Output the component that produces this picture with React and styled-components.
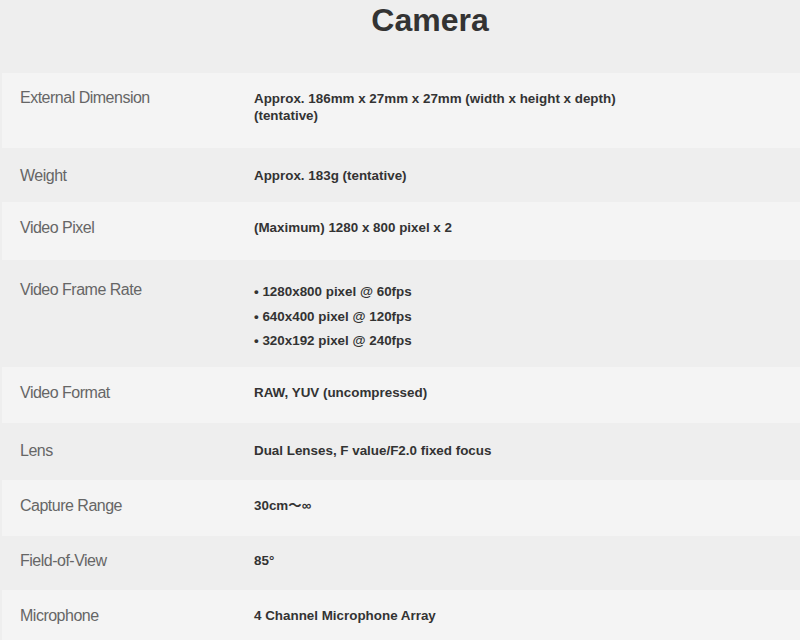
import React from "react";
import styled, { createGlobalStyle } from "styled-components";

const Global = createGlobalStyle`
  html, body {
    margin: 0;
    padding: 0;
    background: #eeeeee;
  }
  body {
    font-family: "Liberation Sans", Arial, sans-serif;
  }
`

const Page = styled.div`
  width: 800px;
  height: 640px;
  overflow: hidden;
  background: #eeeeee;
`

const Header = styled.header`
  height: 73px;
  padding-left: 60px;
  text-align: center;
`

const Title = styled.h1`
  margin: 0;
  font-size: 32px;
  line-height: 40px;
  font-weight: bold;
  color: #333333;
`

const Row = styled.div`
  display: grid;
  grid-template-columns: 234px 1fr;
  box-sizing: border-box;
  min-height: ${p => p.$h}px;
  padding: ${p => p.$pt}px 20px 0 20px;
  background: ${p => (p.$light ? "#f4f4f4" : "#eeeeee")};
  box-shadow: ${p => (p.$light ? "inset 2px 0 0 #eeeeee" : "none")};
`

const Label = styled.div`
  font-size: 16px;
  line-height: 20px;
  letter-spacing: -0.5px;
  color: #666666;
`

const Value = styled.div`
  font-size: 13.4px;
  line-height: ${p => p.$lh || 20}px;
  padding-top: ${p => p.$mt || 0}px;
  font-weight: bold;
  color: #333333;
  font-family: "Liberation Sans", "Noto Sans CJK JP", sans-serif;
`

const List = styled.ul`
  margin: 0;
  padding: 0;
  list-style: none;
`

const Item = styled.li`
  font-size: 13.4px;
  line-height: 24.5px;
  font-weight: bold;
  color: #333333;
`

const rows = [
  { label: "External Dimension", h: 75, pt: 15, value: <Value $lh={17} $mt={2}>Approx. 186mm x 27mm x 27mm (width x height x depth)<br />(tentative)</Value> },
  { label: "Weight", h: 54, pt: 18, value: <Value>Approx. 183g (tentative)</Value> },
  { label: "Video Pixel", h: 58, pt: 16, value: <Value>(Maximum) 1280 x 800 pixel x 2</Value> },
  {
    label: "Video Frame Rate", h: 107, pt: 20,
    value: (
      <List>
        <Item>• 1280x800 pixel @ 60fps</Item>
        <Item>• 640x400 pixel @ 120fps</Item>
        <Item>• 320x192 pixel @ 240fps</Item>
      </List>
    ),
  },
  { label: "Video Format", h: 56, pt: 16, value: <Value>RAW, YUV (uncompressed)</Value> },
  { label: "Lens", h: 57, pt: 18, value: <Value>Dual Lenses, F value/F2.0 fixed focus</Value> },
  { label: "Capture Range", h: 56, pt: 16, value: <Value>30cm〜∞</Value> },
  { label: "Field-of-View", h: 54, pt: 15, value: <Value>85°</Value> },
  { label: "Microphone", h: 56, pt: 16, value: <Value>4 Channel Microphone Array</Value> },
]

function App() {
  return (
    <Page>
      <Global />
      <Header>
        <Title>Camera</Title>
      </Header>
      {rows.map((r, i) => (
        <Row key={r.label} $light={i % 2 === 0} $h={r.h} $pt={r.pt}>
          <Label>{r.label}</Label>
          {r.value}
        </Row>
      ))}
    </Page>
  )
}

export default App
